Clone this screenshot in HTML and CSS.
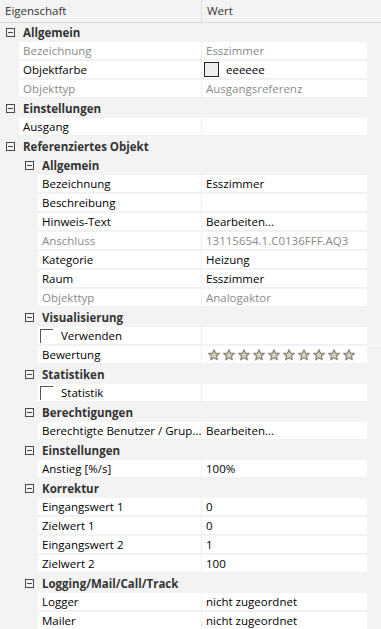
FILE: index.html
```html
<!DOCTYPE html>
<html lang="de">
<head>
<meta charset="utf-8">
<title>Eigenschaften</title>
<link rel="stylesheet" href="styles.css">
</head>
<body>
<div class="grid">
  <div class="head">
    <div class="hname">Eigenschaft</div>
    <div class="hval">Wert</div>
  </div>

  <div class="row cat l0"><span class="tog"></span><span class="ctext">Allgemein</span></div>
  <div class="row l1"><div class="name ro">Bezeichnung</div><div class="val ro">Esszimmer</div><div class="pad"></div></div>
  <div class="row l1"><div class="name">Objektfarbe</div><div class="val"><span class="swatch"></span>eeeeee</div><div class="pad"></div></div>
  <div class="row l1"><div class="name ro">Objekttyp</div><div class="val ro">Ausgangsreferenz</div><div class="pad"></div></div>

  <div class="row cat l0"><span class="tog"></span><span class="ctext">Einstellungen</span></div>
  <div class="row l1"><div class="name">Ausgang</div><div class="val"></div><div class="pad"></div></div>

  <div class="row cat l0"><span class="tog"></span><span class="ctext">Referenziertes Objekt</span></div>
  <div class="row cat l1"><span class="tog"></span><span class="ctext">Allgemein</span></div>
  <div class="row l2"><div class="name">Bezeichnung</div><div class="val">Esszimmer</div><div class="pad"></div></div>
  <div class="row l2"><div class="name">Beschreibung</div><div class="val"></div><div class="pad"></div></div>
  <div class="row l2"><div class="name">Hinweis-Text</div><div class="val">Bearbeiten...</div><div class="pad"></div></div>
  <div class="row l2"><div class="name ro">Anschluss</div><div class="val ro">13115654.1.C0136FFF.AQ3</div><div class="pad"></div></div>
  <div class="row l2"><div class="name">Kategorie</div><div class="val">Heizung</div><div class="pad"></div></div>
  <div class="row l2"><div class="name">Raum</div><div class="val">Esszimmer</div><div class="pad"></div></div>
  <div class="row l2"><div class="name ro">Objekttyp</div><div class="val ro">Analogaktor</div><div class="pad"></div></div>

  <div class="row cat l1"><span class="tog"></span><span class="ctext">Visualisierung</span></div>
  <div class="row l2 chkrow"><div class="name"><span class="chk"></span>Verwenden</div><div class="val"></div><div class="pad"></div></div>
  <div class="row l2"><div class="name">Bewertung</div><div class="val stars">
    <svg class="star" viewBox="0 0 12 12"><path d="M6 0.8 L7.5 4.3 L11.3 4.5 L8.4 7 L9.3 10.8 L6 8.8 L2.7 10.8 L3.6 7 L0.7 4.5 L4.5 4.3 Z"/></svg>
    <svg class="star" viewBox="0 0 12 12"><path d="M6 0.8 L7.5 4.3 L11.3 4.5 L8.4 7 L9.3 10.8 L6 8.8 L2.7 10.8 L3.6 7 L0.7 4.5 L4.5 4.3 Z"/></svg>
    <svg class="star" viewBox="0 0 12 12"><path d="M6 0.8 L7.5 4.3 L11.3 4.5 L8.4 7 L9.3 10.8 L6 8.8 L2.7 10.8 L3.6 7 L0.7 4.5 L4.5 4.3 Z"/></svg>
    <svg class="star" viewBox="0 0 12 12"><path d="M6 0.8 L7.5 4.3 L11.3 4.5 L8.4 7 L9.3 10.8 L6 8.8 L2.7 10.8 L3.6 7 L0.7 4.5 L4.5 4.3 Z"/></svg>
    <svg class="star" viewBox="0 0 12 12"><path d="M6 0.8 L7.5 4.3 L11.3 4.5 L8.4 7 L9.3 10.8 L6 8.8 L2.7 10.8 L3.6 7 L0.7 4.5 L4.5 4.3 Z"/></svg>
    <svg class="star" viewBox="0 0 12 12"><path d="M6 0.8 L7.5 4.3 L11.3 4.5 L8.4 7 L9.3 10.8 L6 8.8 L2.7 10.8 L3.6 7 L0.7 4.5 L4.5 4.3 Z"/></svg>
    <svg class="star" viewBox="0 0 12 12"><path d="M6 0.8 L7.5 4.3 L11.3 4.5 L8.4 7 L9.3 10.8 L6 8.8 L2.7 10.8 L3.6 7 L0.7 4.5 L4.5 4.3 Z"/></svg>
    <svg class="star" viewBox="0 0 12 12"><path d="M6 0.8 L7.5 4.3 L11.3 4.5 L8.4 7 L9.3 10.8 L6 8.8 L2.7 10.8 L3.6 7 L0.7 4.5 L4.5 4.3 Z"/></svg>
    <svg class="star" viewBox="0 0 12 12"><path d="M6 0.8 L7.5 4.3 L11.3 4.5 L8.4 7 L9.3 10.8 L6 8.8 L2.7 10.8 L3.6 7 L0.7 4.5 L4.5 4.3 Z"/></svg>
    <svg class="star" viewBox="0 0 12 12"><path d="M6 0.8 L7.5 4.3 L11.3 4.5 L8.4 7 L9.3 10.8 L6 8.8 L2.7 10.8 L3.6 7 L0.7 4.5 L4.5 4.3 Z"/></svg>
  </div><div class="pad"></div></div>

  <div class="row cat l1"><span class="tog"></span><span class="ctext">Statistiken</span></div>
  <div class="row l2"><div class="name"><span class="chk"></span>Statistik</div><div class="val"></div><div class="pad"></div></div>

  <div class="row cat l1"><span class="tog"></span><span class="ctext">Berechtigungen</span></div>
  <div class="row l2"><div class="name">Berechtigte Benutzer / Grup...</div><div class="val">Bearbeiten...</div><div class="pad"></div></div>

  <div class="row cat l1"><span class="tog"></span><span class="ctext">Einstellungen</span></div>
  <div class="row l2"><div class="name">Anstieg [%/s]</div><div class="val">100%</div><div class="pad"></div></div>

  <div class="row cat l1"><span class="tog"></span><span class="ctext">Korrektur</span></div>
  <div class="row l2"><div class="name">Eingangswert 1</div><div class="val">0</div><div class="pad"></div></div>
  <div class="row l2"><div class="name">Zielwert 1</div><div class="val">0</div><div class="pad"></div></div>
  <div class="row l2"><div class="name">Eingangswert 2</div><div class="val">1</div><div class="pad"></div></div>
  <div class="row l2"><div class="name">Zielwert 2</div><div class="val">100</div><div class="pad"></div></div>

  <div class="row cat l1"><span class="tog"></span><span class="ctext">Logging/Mail/Call/Track</span></div>
  <div class="row l2"><div class="name">Logger</div><div class="val">nicht zugeordnet</div><div class="pad"></div></div>
  <div class="row l2"><div class="name">Mailer</div><div class="val">nicht zugeordnet</div><div class="pad"></div></div>
</div>
</body>
</html>
```

FILE: styles.css
```css
html, body {
  margin: 0;
  padding: 0;
  background: #f3f3f3;
}
body {
  font-family: "Open Sans", "Noto Sans", sans-serif;
  font-size: 11.5px;
  color: #000;
  overflow: hidden;
}
.grid {
  width: 381px;
  display: flex;
  flex-direction: column;
}
.head {
  display: flex;
  height: 22px;
  border-bottom: 1px solid #d9d9d9;
  color: #333;
  line-height: 22px;
}
.hname {
  width: 196px;
  padding-left: 5px;
  border-right: 1px solid #dcdcdc;
}
.hval {
  padding-left: 5px;
}
.row {
  display: flex;
  height: 19px;
  line-height: 18px;
  white-space: nowrap;
}
.name, .val {
  background: #fff;
  border-bottom: 1px solid #f0f0f0;
  height: 18px;
  overflow: hidden;
}
.name {
  box-sizing: border-box;
  padding-left: 4px;
  border-right: 1px solid #f0f0f0;
}
.l1 .name { margin-left: 19px; width: 183px; }
.l2 .name { margin-left: 38px; width: 164px; padding-left: 4px; }
.val {
  width: 165px;
  padding-left: 4px;
  box-sizing: border-box;
  display: flex;
  align-items: center;
}
.pad { width: 14px; }
.chkrow .pad {
  height: 18px;
  border-bottom: 1px solid #fafafa;
}
.ro { color: #8a8a8a; }

.cat {
  align-items: center;
}
.tog {
  box-sizing: border-box;
  width: 9px;
  height: 9px;
  border: 1px solid #4a4a4a;
  margin-left: 6px;
  margin-right: 8px;
  position: relative;
}
.tog::after {
  content: "";
  position: absolute;
  left: 1px;
  top: 3px;
  width: 5px;
  height: 1px;
  background: #4a4a4a;
}
.cat.l1 .tog { margin-left: 25px; }
.ctext {
  font-weight: bold;
  color: #333;
}

.swatch {
  box-sizing: border-box;
  width: 15px;
  height: 15px;
  border: 1px solid #222;
  background: #eee;
  margin-right: 7px;
  margin-left: -2px;
}
.chk {
  display: inline-block;
  box-sizing: border-box;
  width: 13px;
  height: 14px;
  border-top: 1px solid #555;
  border-left: 1px solid #555;
  vertical-align: -3px;
  margin-left: -2px;
  margin-right: 8px;
}
.stars {
  padding-left: 6px;
  gap: 3px;
}
.star {
  width: 12px;
  height: 12px;
  fill: #d6d2c8;
  stroke: #8f8877;
  stroke-width: 1.3;
  stroke-linejoin: round;
}
```
